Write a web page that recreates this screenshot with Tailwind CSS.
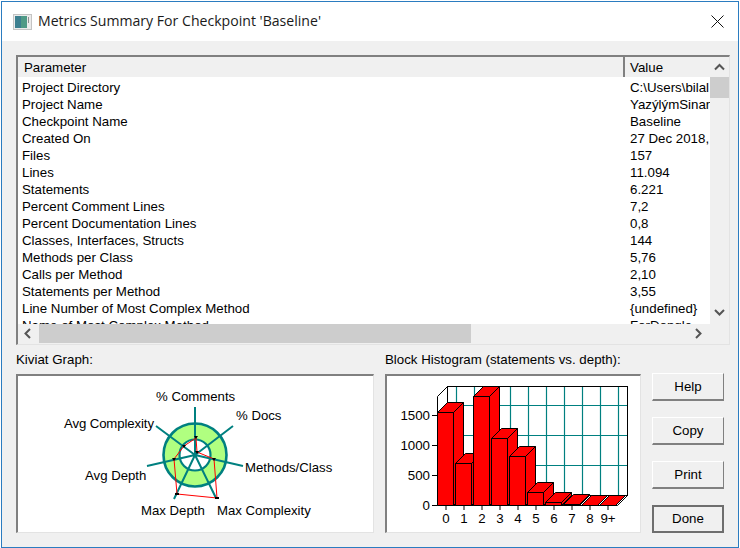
<!DOCTYPE html>
<html lang="en">

<head>
    <meta charset="UTF-8">
    <title>Metrics Summary</title>
    <script src="https://cdn.jsdelivr.net/npm/@tailwindcss/browser@4"></script>
</head>

<body class="bg-white w-[740px] h-[548px] overflow-hidden font-['Liberation_Sans',sans-serif] text-[13.3px] leading-[17px] text-[#000]">
    <div class="ml-px mt-px w-[738px] h-[547px] border border-[#2b7cc0] flex flex-col">
        <!-- title bar -->
        <div class="h-[39px] bg-white flex items-center pl-[11px] pr-[14px] shrink-0">
            <svg width="19" height="16" viewBox="0 0 19 16" class="shrink-0">
                <rect x="0.5" y="0.5" width="18" height="15" fill="#ebebeb" stroke="#c4c4c4" />
                <rect x="2" y="2" width="12" height="12" fill="#4f9a86" />
                <rect x="2" y="2" width="6" height="12" fill="#3c7f8f" />
                <rect x="15" y="3" width="1" height="6" fill="#909090" />
            </svg>
            <span class="ml-[6px] mb-[2px] font-['Open_Sans',sans-serif] text-[14.1px] text-[#1a1a1a]">Metrics Summary For Checkpoint 'Baseline'</span>
            <svg width="13" height="13" viewBox="0 0 13 13" class="ml-auto">
                <path d="M0.5 0.5 12.5 12.5 M12.5 0.5 0.5 12.5" stroke="#111" stroke-width="1" fill="none" />
            </svg>
        </div>

        <div class="flex-1 bg-[#f0f0f0] px-[14px] pt-[14px]">
            <!-- metrics table -->
            <div class="h-[290px] w-[714px] border-l-2 border-t-2 border-[#808080] border-r border-b border-r-[#e3e3e3] border-b-[#e3e3e3] flex flex-col">
                <div class="flex-1 min-h-0 flex">
                    <div class="flex-1 min-w-0 flex flex-col bg-white">
                        <div class="h-[20px] flex bg-[#f0f0f0] shrink-0">
                            <div class="w-[607px] pl-[6px] border-r-2 border-[#808080] leading-[21px]">Parameter</div>
                            <div class="flex-1 pl-[5px] leading-[21px]">Value</div>
                        </div>
                        <div id="rows" class="flex-1 min-h-0 overflow-hidden pt-[2px]"></div>
                    </div>
                    <div class="w-[19px] bg-[#f0f0f0] flex flex-col items-center shrink-0">
                        <svg width="19" height="20" viewBox="0 0 19 20">
                            <path d="M5 12.5 9.5 8 14 12.5" stroke="#555" stroke-width="2" fill="none" />
                        </svg>
                        <div class="w-[19px] h-[21px] bg-[#cdcdcd]"></div>
                        <svg width="19" height="20" viewBox="0 0 19 20" class="mt-auto mb-[2px]">
                            <path d="M5 8 9.5 12.5 14 8" stroke="#555" stroke-width="2" fill="none" />
                        </svg>
                    </div>
                </div>
                <!-- horizontal scrollbar -->
                <div class="h-[19px] mb-px bg-[#f0f0f0] flex shrink-0">
                    <svg width="21" height="19" viewBox="0 0 21 19">
                        <path d="M12 5 7.5 9.5 12 14" stroke="#555" stroke-width="2" fill="none" />
                    </svg>
                    <div class="w-[432px] bg-[#cdcdcd]"></div>
                    <svg width="21" height="19" viewBox="0 0 21 19" class="ml-auto mr-[20px]">
                        <path d="M8 5 12.5 9.5 8 14" stroke="#555" stroke-width="2" fill="none" />
                    </svg>
                </div>
            </div>

            <div class="flex mt-[6px]">
                <!-- kiviat -->
                <div class="w-[358px] shrink-0">
                    <div class="h-[23px] leading-[17px]">Kiviat Graph:</div>
                    <div class="h-[159px] border-l-2 border-t-2 border-[#808080] border-r border-b border-r-[#e3e3e3] border-b-[#e3e3e3] bg-white">
                        <svg width="355" height="156" viewBox="18 376 355 156" class="block">
                            <circle cx="195" cy="455" r="31.5" fill="#b0ff80" stroke="#008080" stroke-width="2.6" />
                            <circle cx="195" cy="455" r="15.5" fill="#fff" stroke="#008080" stroke-width="2.2" />
                            <path d="M195 455 195 407 M195 455 233 426 M195 455 243 466 M195 455 216 498 M195 455 174 499 M195 455 147 466 M195 455 156 426" stroke="#008080" stroke-width="2" fill="none" />
                            <path d="M196 438 197 452 214 459 217 498 177 494 174 459 184 446 Z" stroke="#f00" stroke-width="1" fill="none" />
                            <path d="M194 436h4l-2 3z M195 451h4l-2 3z M212 458h4l-2 3z M215 497h4v2h-4z M175 493h4v2h-4z M172 458h4l-2 3z M182 445h4l-2 3z" fill="#000" />
                            <g font-size="13.2" fill="#000">
                                <text x="156" y="401">% Comments</text>
                                <text x="236" y="420">% Docs</text>
                                <text x="64" y="428" textLength="90">Avg Complexity</text>
                                <text x="245" y="472">Methods/Class</text>
                                <text x="85" y="480">Avg Depth</text>
                                <text x="141" y="515">Max Depth</text>
                                <text x="217" y="515">Max Complexity</text>
                            </g>
                        </svg>
                    </div>
                </div>

                <!-- histogram -->
                <div class="w-[256px] ml-[11px] shrink-0">
                    <div class="h-[23px] leading-[17px]">Block Histogram (statements vs. depth):</div>
                    <div class="h-[159px] border-l-2 border-t-2 border-[#808080] border-r border-b border-r-[#e3e3e3] border-b-[#e3e3e3] bg-white">
                        <svg id="hist" width="253" height="156" viewBox="387 376 253 156" class="block"></svg>
                    </div>
                </div>

                <!-- buttons -->
                <div class="ml-[11px] pt-[22px] flex flex-col gap-[16px]">
                    <button class="w-[72px] h-[28px] bg-[#f0f0f0] border border-t-white border-l-white border-r-[#808080] border-b-[#808080] border-b-2">Help</button>
                    <button class="w-[72px] h-[28px] bg-[#f0f0f0] border border-t-white border-l-white border-r-[#808080] border-b-[#808080] border-b-2">Copy</button>
                    <button class="w-[72px] h-[28px] bg-[#f0f0f0] border border-t-white border-l-white border-r-[#808080] border-b-[#808080] border-b-2">Print</button>
                    <button class="w-[72px] h-[28px] pb-[2px] bg-[#f0f0f0] border-2 border-[#6e6e6e]">Done</button>
                </div>
            </div>
        </div>
    </div>

    <script>
        const data = [
            ['Project Directory', 'C:\\Users\\bilal'],
            ['Project Name', 'YazýlýmSinan'],
            ['Checkpoint Name', 'Baseline'],
            ['Created On', '27 Dec 2018, 11:20'],
            ['Files', '157'],
            ['Lines', '11.094'],
            ['Statements', '6.221'],
            ['Percent Comment Lines', '7,2'],
            ['Percent Documentation Lines', '0,8'],
            ['Classes, Interfaces, Structs', '144'],
            ['Methods per Class', '5,76'],
            ['Calls per Method', '2,10'],
            ['Statements per Method', '3,55'],
            ['Line Number of Most Complex Method', '{undefined}'],
            ['Name of Most Complex Method', 'ForDongle']
        ];
        document.getElementById('rows').innerHTML = data.map(r => `
            <div class="flex h-[17px] whitespace-nowrap">
                <div class="w-[608px] pl-[4px]">${r[0]}</div>
                <div class="flex-1 min-w-0 overflow-hidden pl-[4px]">${r[1]}</div>
            </div>`).join('');

        // histogram drawn in page coordinates, 30px = 500 statements
        const baseY = 505, teal = '#008080';
        let s = `<rect x="447.5" y="386.5" width="180" height="109" fill="#fff" stroke="#000"/>`;
        [456, 474, 492, 510, 528, 546, 564, 582, 600, 618].forEach(x => {
            s += `<path d="M${x + .5} 387V495" stroke="${teal}" stroke-width="1.2"/>`;
        });
        [405, 435, 465].forEach(y => {
            s += `<path d="M448 ${y + .5}H627" stroke="${teal}" stroke-width="1.2"/>`;
        });
        s += `<path d="M447.5 386.5 437.5 396.5V505.5H617.5L627.5 495.5" stroke="#000" fill="none"/>`;
        const tops = [412, 463, 396, 438, 456, 492, 502, 504, 505, 505];
        tops.forEach((top, i) => {
            const x = 437.5 + i * 18, w = 16, d = 10;
            const y = top + .5, b = baseY + .5;
            s += `<path d="M${x + w} ${y}l${d} -${d}V${b - d}L${x + w} ${b}Z M${x} ${y}l${d} -${d}h${w}l-${d} ${d}Z M${x} ${y}h${w}V${b}H${x}Z" fill="#f00" stroke="#000"/>`;
            s += `<path d="M${x + 8.5} 505v5" stroke="#000"/>`;
            s += `<text x="${x + 8.5}" y="523" text-anchor="middle" font-size="13.3">${i == 9 ? '9+' : i}</text>`;
        });
        [[0, 505], [500, 475], [1000, 445], [1500, 415]].forEach(([v, y]) => {
            s += `<path d="M432 ${y + .5}H437" stroke="#000"/>`;
            s += `<text x="430" y="${y + 5}" text-anchor="end" font-size="13.3">${v}</text>`;
        });
        document.getElementById('hist').innerHTML = s;
    </script>
</body>

</html>
